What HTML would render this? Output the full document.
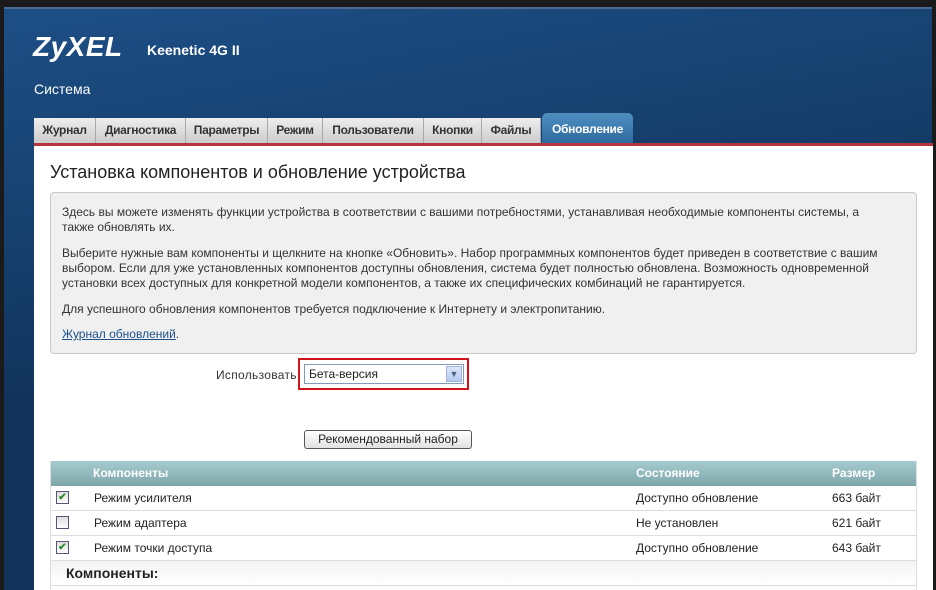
<!DOCTYPE html>
<html><head><meta charset="utf-8"><style>
*{margin:0;padding:0;box-sizing:border-box}
body{width:936px;height:590px;overflow:hidden;background:#1a1a1a;font-family:"Liberation Sans",sans-serif;position:relative}
.a{position:absolute}
#blue{left:4px;top:7px;width:928px;height:583px;background:linear-gradient(170deg,#1d4f86 0%,#16406e 30%,#12335a 55%,#12335a 100%);border-top:2px solid #4a6a93}
.tab{position:absolute;top:118px;height:25px;background:linear-gradient(#eee,#ccc);border-right:1px solid #aaa;font:bold 12px "Liberation Sans",sans-serif;color:#333;text-align:center;line-height:25px;letter-spacing:-0.3px}
#content{left:34px;top:146px;width:899px;height:444px;background:#fff}
.p{position:absolute;left:62px;font-size:12px;color:#333;line-height:15px}
.row{position:absolute;left:50px;width:867px;height:25px;border-bottom:1px solid #ddd;font-size:12px;color:#222;line-height:25px;background:#fff}
.row span{position:absolute}
.cb{position:absolute;left:6px;top:5px;width:13px;height:13px;border:1px solid #557;background:linear-gradient(#ddd,#fff);font-size:10px;color:#2a8a2a;line-height:11px;text-align:center;font-weight:bold}
</style></head><body>
<div id="blue" class="a"></div>
<div class="a" style="left:33px;top:31px;font:bold italic 28px 'Liberation Sans',sans-serif;color:#fff;letter-spacing:0.5px">ZyXEL</div>
<div class="a" style="left:147px;top:42px;font:bold 14px 'Liberation Sans',sans-serif;color:#fff">Keenetic 4G II</div>
<div class="a" style="left:34px;top:81px;font:14px 'Liberation Sans',sans-serif;color:#fff">Система</div>
<div class="tab" style="left:34px;width:62px">Журнал</div>
<div class="tab" style="left:96px;width:90px">Диагностика</div>
<div class="tab" style="left:186px;width:82px">Параметры</div>
<div class="tab" style="left:268px;width:55px">Режим</div>
<div class="tab" style="left:323px;width:101px">Пользователи</div>
<div class="tab" style="left:424px;width:58px">Кнопки</div>
<div class="tab" style="left:482px;width:59px">Файлы</div>
<div class="tab" style="left:542px;top:113px;height:30px;width:91px;background:linear-gradient(#4f8fc0,#2d6a9f);color:#fff;border-radius:5px 5px 0 0;border:none;line-height:32px">Обновление</div>
<div class="a" style="left:34px;top:143px;width:899px;height:3px;background:#b8343c"></div>
<div id="content" class="a"></div>
<div class="a" style="left:50px;top:162px;font-size:18px;color:#222">Установка компонентов и обновление устройства</div>
<div class="a" style="left:50px;top:192px;width:867px;height:162px;background:#f0f0f0;border:1px solid #c8c8c8;border-radius:4px"></div>
<div class="p" style="top:205px;width:830px">Здесь вы можете изменять функции устройства в соответствии с вашими потребностями, устанавливая необходимые компоненты системы, а<br>также обновлять их.</div>
<div class="p" style="top:246px;width:840px">Выберите нужные вам компоненты и щелкните на кнопке «Обновить». Набор программных компонентов будет приведен в соответствие с вашим выбором. Если для уже установленных компонентов доступны обновления, система будет полностью обновлена. Возможность одновременной установки всех доступных для конкретной модели компонентов, а также их специфических комбинаций не гарантируется.</div>
<div class="p" style="top:302px">Для успешного обновления компонентов требуется подключение к Интернету и электропитанию.</div>
<div class="p" style="top:327px"><span style="color:#1a4f8a;text-decoration:underline">Журнал обновлений</span>.</div>
<div class="a" style="left:216px;top:368px;font-size:12px;color:#333;letter-spacing:0.3px">Использовать</div>
<div class="a" style="left:298px;top:358px;width:171px;height:32px;border:2px solid #d0141c"></div>
<div class="a" style="left:304px;top:364px;width:160px;height:20px;border:1px solid #7f9db9;background:#fff;font-size:12px;color:#222;line-height:18px;padding-left:4px">Бета-версия</div>
<div class="a" style="left:446px;top:366px;width:16px;height:16px;background:linear-gradient(#dce6f8,#b4c8ee);border:1px solid #9fb3dd;color:#4d6185;font-size:9px;text-align:center;line-height:14px">▼</div>
<div class="a" style="left:304px;top:430px;width:168px;height:19px;border:1px solid #555;border-radius:3px;background:linear-gradient(#fff,#e2e2e2);font-size:12px;text-align:center;line-height:17px;color:#222">Рекомендованный набор</div>
<div class="a" style="left:50px;top:461px;width:867px;height:25px;background:linear-gradient(#a5cbce,#7ea6aa);font:bold 12px 'Liberation Sans',sans-serif;color:#fff;line-height:25px">
<span class="a" style="left:43px">Компоненты</span><span class="a" style="left:586px">Состояние</span><span class="a" style="left:782px">Размер</span></div>
<div class="row" style="top:486px"><div class="cb">✔</div><span style="left:44px">Режим усилителя</span><span style="left:586px">Доступно обновление</span><span style="left:782px">663 байт</span></div>
<div class="row" style="top:511px"><div class="cb"></div><span style="left:44px">Режим адаптера</span><span style="left:586px">Не установлен</span><span style="left:782px">621 байт</span></div>
<div class="row" style="top:536px"><div class="cb">✔</div><span style="left:44px">Режим точки доступа</span><span style="left:586px">Доступно обновление</span><span style="left:782px">643 байт</span></div>
<div class="row" style="top:561px;height:25px;background:linear-gradient(#f3f3f3,#fff)"><span style="left:16px;font-weight:bold;font-size:14px">Компоненты:</span></div>
<div class="a" style="left:50px;top:461px;width:1px;height:129px;background:#ddd"></div>
<div class="a" style="left:916px;top:461px;width:1px;height:129px;background:#ddd"></div>
</body></html>
